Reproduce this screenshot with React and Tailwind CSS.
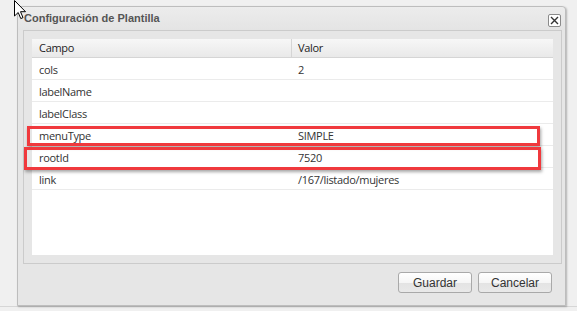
import React from "react";

const rows = [
  ["cols", "2"],
  ["labelName", ""],
  ["labelClass", ""],
  ["menuType", "SIMPLE"],
  ["rootId", "7520"],
  ["link", "/167/listado/mujeres"],
];

export default function App() {
  return (
    <div className="relative w-[577px] h-[311px] overflow-hidden bg-[#f0f0f0]" style={{ fontFamily: '"Open Sans", "Noto Sans", sans-serif' }}>
      <div className="absolute left-0 right-0 top-[306px] h-px bg-[#d6d6d6]" />
      <div className="ml-[17px] pt-[6px]">
        <div className="relative w-[549px] h-[300px] flex flex-col bg-[#e6e6e6] border border-[#bdbdbd] rounded-t-[4px] shadow-[1px_1px_2px_rgba(0,0,0,0.25)]">
          <div className="h-[23px] flex items-center justify-between pl-[6px] pr-[4px] bg-[linear-gradient(#ececec,#e4e4e4)] rounded-t-[4px]">
            <span className="text-[11px] font-bold text-[#555] leading-none" style={{ fontFamily: '"Liberation Sans", Arial, sans-serif' }}>Configuración de Plantilla</span>
            <div className="w-[13px] h-[13px] mt-[4px] border border-[#8a8a8a] rounded-[2px] bg-white flex items-center justify-center">
              <svg width="9" height="9" viewBox="0 0 9 9"><path d="M1 1L8 8M8 1L1 8" stroke="#333" strokeWidth="1.4" /></svg>
            </div>
          </div>
          <div className="ml-[5px] mr-[3px] h-[234px] border border-[#cbcbcb] bg-[#e6e6e6] p-[8px]">
            <div className="h-[216px] bg-white text-[11px] text-[#333] tracking-[-0.3px]">
              <div className="flex h-[19px] bg-[linear-gradient(#f7f7f7,#e9e9e9)] border-b border-[#d5d5d5] text-[#222]">
                <div className="w-[260px] pl-[7px] pt-[1px] flex items-center border-r border-[#d5d5d5]">Campo</div>
                <div className="flex-1 pl-[6px] pt-[1px] flex items-center">Valor</div>
              </div>
              {rows.map(([k, v]) => (
                <div key={k} className="flex h-[22px] border-b border-[#ebebeb]">
                  <div className="w-[260px] pl-[7px] pt-[3px] flex items-center">{k}</div>
                  <div className="flex-1 pl-[6px] pt-[3px] flex items-center">{v}</div>
                </div>
              ))}
            </div>
          </div>
          <div className="flex-1 flex justify-end items-start pt-[8px] pr-[13px] gap-[6px]">
            {["Guardar", "Cancelar"].map((t) => (
              <button key={t} className="w-[74px] h-[21px] border border-[#a9a9a9] rounded-[3px] bg-[linear-gradient(#ffffff_0%,#f6f6f6_50%,#e3e3e3_51%,#e9e9e9_100%)] text-[12px] text-[#333] leading-none" style={{ fontFamily: '"Liberation Sans", Arial, sans-serif' }}>{t}</button>
            ))}
          </div>
        </div>
      </div>
      <div className="absolute left-[27px] top-[126px] w-[513px] h-[20px] border-[3px] border-[#f0393d] shadow-[1px_2px_3px_rgba(0,0,0,0.35)]" />
      <div className="absolute left-[24px] top-[147px] w-[517px] h-[23px] border-[3px] border-[#f0393d] shadow-[1px_2px_3px_rgba(0,0,0,0.35)]" />
      <svg className="absolute left-[14px] top-0" width="14" height="21" viewBox="0 0 14 21">
        <path d="M0.5 0.5 L0.5 16 L4.2 12.5 L6.8 18.6 L9 17.6 L6.5 11.7 L11.5 11.7 Z" fill="white" stroke="black" strokeWidth="1" strokeLinejoin="miter" />
      </svg>
    </div>
  );
}
